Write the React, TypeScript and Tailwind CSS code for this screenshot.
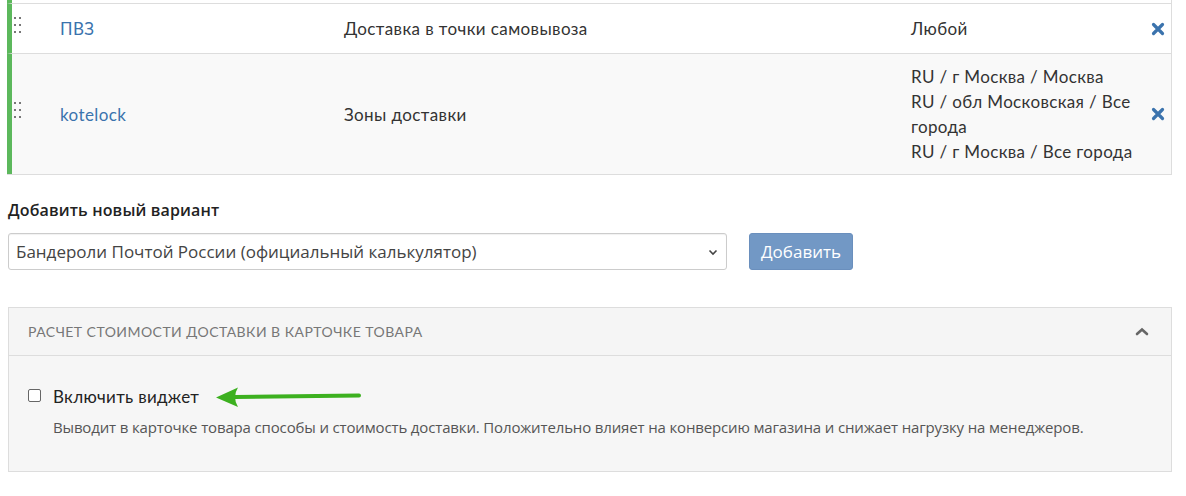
import React from "react";

const lato = { fontFamily: "Lato, 'Liberation Sans', sans-serif" };
const open = { fontFamily: "'Open Sans', 'Liberation Sans', sans-serif" };

function DragHandle() {
  return (
    <div className="grid grid-cols-2 gap-x-[3px] gap-y-[5px] w-[7px]">
      {Array.from({ length: 6 }).map((_, i) => (
        <span key={i} className="block w-[2px] h-[2px] bg-[#777]" />
      ))}
    </div>
  );
}

function RemoveIcon() {
  return (
    <svg width="14" height="14" viewBox="0 0 14 14" aria-hidden="true">
      <path d="M2.5 2.5 L11.5 11.5 M11.5 2.5 L2.5 11.5" stroke="#3b73ad" strokeWidth="3.2" strokeLinecap="round" />
    </svg>
  );
}

type Row = { name: string; type: string; regions: string[]; shaded: boolean; pad: string };

const rows: Row[] = [
  { name: "ПВЗ", type: "Доставка в точки самовывоза", regions: ["Любой"], shaded: false, pad: "py-3" },
  {
    name: "kotelock",
    type: "Зоны доставки",
    regions: ["RU / г Москва / Москва", "RU / обл Московская / Все города", "RU / г Москва / Все города"],
    shaded: true,
    pad: "py-[10px]",
  },
];

export default function App() {
  return (
    <div className="w-[1186px] h-[496px] bg-white overflow-hidden text-[#333]" style={lato}>
      {/* delivery variants table */}
      <div className="ml-[7px] w-[1165px] border-r border-[#ddd]">
        <div className="h-[3px] border-l-[5px] border-[#5cb85c] bg-white" />
        {rows.map((r) => (
          <div
            key={r.name}
            className={`flex items-center border-t border-[#ddd] border-l-[5px] border-l-[#5cb85c] ${r.shaded ? "bg-[#f9f9f9]" : "bg-white"} ${r.pad}`}
          >
            <div className="w-[48px] pl-[2px] -mt-[8px]">
              <DragHandle />
            </div>
            <div className="w-[284px] text-[17px] leading-[25px] tracking-[0.4px] text-[#3b73ad]">{r.name}</div>
            <div className="w-[567px] text-[17px] leading-[25px] tracking-[0.4px]">{r.type}</div>
            <div className="w-[232px] text-[17px] leading-[25px] tracking-[0.35px]">
              {r.regions.map((t) => (
                <div key={t}>{t}</div>
              ))}
            </div>
            <div className="flex-1 flex justify-end pr-[6px]">
              <RemoveIcon />
            </div>
          </div>
        ))}
        <div className="border-t border-[#ddd] -mr-px" />
      </div>

      {/* add new variant */}
      <div className="ml-[8px] mt-[24px]" style={open}>
        <div className="text-[16px] font-semibold leading-[22px] text-[#222] tracking-[0.15px]">Добавить новый вариант</div>
        <div className="flex items-center gap-[22px] mt-[12px]">
          <div className="relative w-[719px] h-[37px] border border-[#ccc] rounded-[3px] bg-white flex items-center pl-[7px] shadow-[inset_0_1px_1px_rgba(0,0,0,0.06)]">
            <span className="text-[17px] text-[#444]">Бандероли Почтой России (официальный калькулятор)</span>
            <svg className="absolute right-[8px] top-[15px]" width="10" height="7" viewBox="0 0 10 7" aria-hidden="true">
              <path d="M1.5 1.5 L5 5 L8.5 1.5" stroke="#444" strokeWidth="1.6" fill="none" />
            </svg>
          </div>
          <div className="w-[104px] h-[37px] rounded-[3px] bg-[#7298c5] border border-[#6a8fbd] text-white text-[17px] flex items-center justify-center">
            Добавить
          </div>
        </div>
      </div>

      {/* product card widget panel */}
      <div className="ml-[8px] mt-[37px] w-[1164px] border border-[#ddd] bg-[#f6f6f6]">
        <div className="h-[48px] flex items-center justify-between pl-[19px] pr-[20px] bg-[#f5f5f5] border-b border-[#ddd]">
          <span className="text-[14px] uppercase tracking-[0.45px] text-[#777]">Расчет стоимости доставки в карточке товара</span>
          <svg className="mr-[2px]" width="14" height="9" viewBox="0 0 14 9" aria-hidden="true">
            <path d="M2 7 L7 2.5 L12 7" stroke="#666" strokeWidth="2.6" fill="none" strokeLinecap="round" />
          </svg>
        </div>
        <div className="pl-[19px] pr-[20px] pt-[29px] pb-[34px]">
          <div className="flex items-center">
            <span className="block w-[13px] h-[13px] border border-[#666] rounded-[2px] bg-white -mt-[3px]" />
            <span className="ml-[12px] text-[17px] leading-[24px] tracking-[0.3px] text-[#222]">Включить виджет</span>
            <svg className="ml-[16px]" width="148" height="24" viewBox="0 0 148 24" aria-hidden="true">
              <path d="M20 12 L144 10.5" stroke="#3cb01f" strokeWidth="4" strokeLinecap="round" />
              <path d="M1 12.5 L23 2.5 Q17 12 23 22 Z" fill="#3cb01f" />
            </svg>
          </div>
          <div className="ml-[25px] mt-[8px] text-[15px] leading-[20px] text-[#555] tracking-[-0.15px]" style={open}>
            Выводит в карточке товара способы и стоимость доставки. Положительно влияет на конверсию магазина и снижает нагрузку на менеджеров.
          </div>
        </div>
      </div>
    </div>
  );
}
